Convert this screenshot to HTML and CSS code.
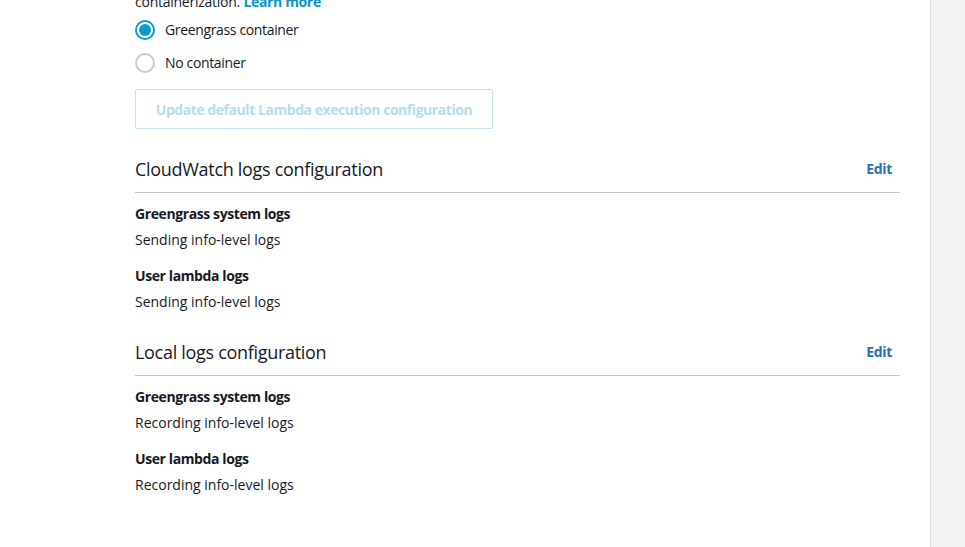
FILE: index.html
```html
<!DOCTYPE html>
<html>
<head>
<meta charset="utf-8">
<link rel="stylesheet" href="styles.css">
</head>
<body>
<div class="page">
  <main class="content">
    <p class="desc">containerization. <a class="link" href="#">Learn more</a></p>
    <div class="radios">
      <label class="radio-row"><span class="radio checked"></span><span>Greengrass container</span></label>
      <label class="radio-row"><span class="radio"></span><span>No container</span></label>
    </div>
    <button class="btn-disabled">Update default Lambda execution configuration</button>

    <section class="section">
      <div class="section-head">
        <h2>CloudWatch logs configuration</h2>
        <a class="edit" href="#">Edit</a>
      </div>
      <div class="field">
        <div class="label">Greengrass system logs</div>
        <div class="value">Sending info-level logs</div>
      </div>
      <div class="field">
        <div class="label">User lambda logs</div>
        <div class="value">Sending info-level logs</div>
      </div>
    </section>

    <section class="section">
      <div class="section-head">
        <h2>Local logs configuration</h2>
        <a class="edit" href="#">Edit</a>
      </div>
      <div class="field">
        <div class="label">Greengrass system logs</div>
        <div class="value">Recording info-level logs</div>
      </div>
      <div class="field">
        <div class="label">User lambda logs</div>
        <div class="value">Recording info-level logs</div>
      </div>
    </section>
  </main>
  <aside class="side"></aside>
</div>
</body>
</html>
```

FILE: styles.css
```css
html, body {
  margin: 0;
  padding: 0;
  background: #ffffff;
  height: 100%;
  overflow: hidden;
}
body {
  font-family: "Open Sans", "Noto Sans", sans-serif;
  font-size: 14px;
  letter-spacing: -0.25px;
  color: #16191f;
}
.page {
  display: flex;
  height: 547px;
}
.content {
  width: 765px;
  padding-left: 135px;
  padding-right: 30px;
}
.side {
  flex: 1;
  background: #f2f3f3;
  border-left: 1px solid #e1e1e1;
}
.desc {
  margin: -8px 0 0 0;
  line-height: 20px;
}
.link {
  color: #0a94c6;
  font-weight: 700;
  letter-spacing: -0.35px;
  text-decoration: none;
}
.radios {
  display: flex;
  flex-direction: column;
  gap: 13px;
  margin-top: 8px;
}
.radio-row {
  display: flex;
  align-items: center;
  gap: 10px;
  line-height: 20px;
  letter-spacing: -0.35px;
}
.radio {
  width: 20px;
  height: 20px;
  box-sizing: border-box;
  border: 2px solid #c8cbcd;
  border-radius: 50%;
  background: #fff;
  position: relative;
}
.radio.checked {
  border: 2px solid #0d9ac9;
}
.radio.checked::after {
  content: "";
  position: absolute;
  left: 2px;
  top: 2px;
  width: 12px;
  height: 12px;
  border-radius: 50%;
  background: #0d9ac9;
}
.btn-disabled {
  display: block;
  margin-top: 16px;
  width: 358px;
  height: 40px;
  background: #fff;
  border: 1px solid #c4e3f1;
  border-radius: 2px;
  color: #b4dcef;
  font-family: inherit;
  font-size: 14px;
  font-weight: 700;
  letter-spacing: -0.45px;
  padding: 0;
}
.section {
  margin-top: 28px;
}
.section-head {
  display: flex;
  justify-content: space-between;
  align-items: center;
  border-bottom: 1px solid #c6c6c6;
  padding-bottom: 11px;
}
.section-head h2 {
  margin: 0;
  font-size: 18px;
  font-weight: 400;
  letter-spacing: -0.3px;
  line-height: 24px;
}
.edit {
  color: #2a6fb7;
  font-weight: 700;
  letter-spacing: -0.3px;
  text-decoration: none;
  padding-right: 8px;
  line-height: 24px;
}
.field {
  margin-top: 11px;
  display: flex;
  flex-direction: column;
  gap: 6px;
  line-height: 20px;
}
.field + .field {
  margin-top: 16px;
}
.label {
  font-weight: 700;
  letter-spacing: -0.4px;
}
.value {
  letter-spacing: 0;
}
```
